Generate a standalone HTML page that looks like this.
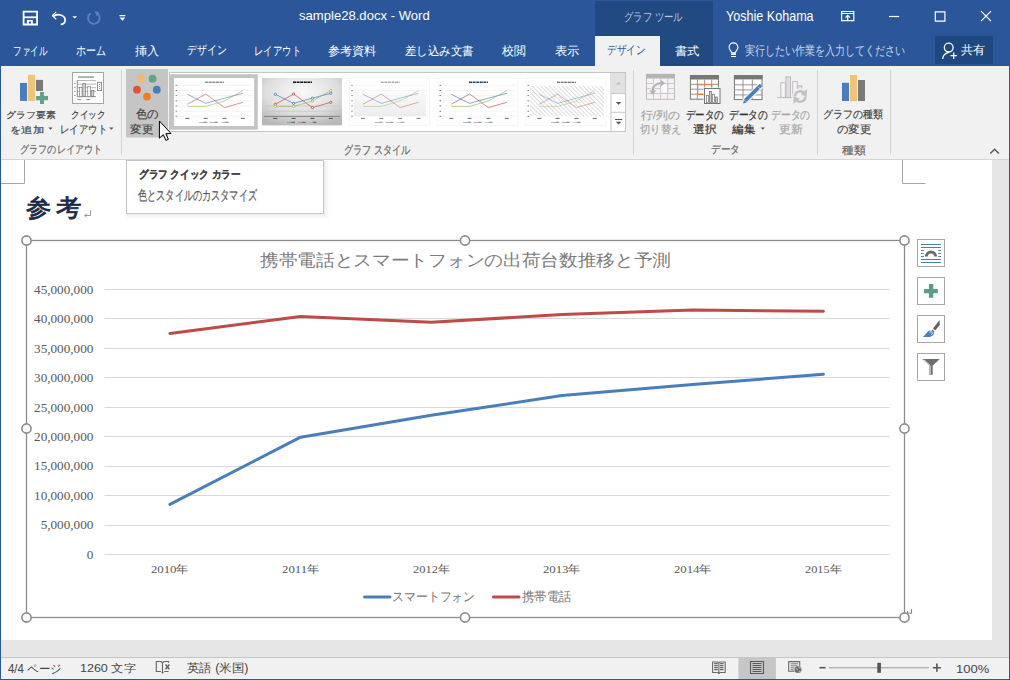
<!DOCTYPE html>
<html><head><meta charset="utf-8">
<style>
*{margin:0;padding:0;box-sizing:border-box}
html,body{width:1010px;height:680px;overflow:hidden;background:#2b579a;font-family:"Liberation Sans",sans-serif;position:relative}
.a{position:absolute;white-space:nowrap}
.t{line-height:1;transform-origin:0 0}
.s{-webkit-text-stroke:0.2px currentColor}
.h{-webkit-text-stroke:0.8px currentColor}
svg{position:absolute;left:0;top:0;overflow:visible}
</style></head><body>
<!-- title bar -->
<div class="a" style="left:595px;top:1px;width:118px;height:65px;background:#224a82"></div>
<div class="a" style="left:595px;top:36px;width:65px;height:30px;background:#f1f1f1"></div>
<div class="a" style="left:935px;top:36px;width:58px;height:28px;background:#1f4880"></div>
<svg width="1010" height="66" style="width:1010px;height:66px">
 <!-- save -->
 <g fill="none" stroke="#fff">
  <path d="M23.6 11.6h13.5v12.9h-13.5z" stroke-width="1.8"/>
  <path d="M23.6 17.3h13.5" stroke-width="1.8"/>
 </g>
 <path d="M26.9 19.9h5.9v4.7h-5.9z M29 21.6v3h2v-3z" fill="#fff" fill-rule="evenodd"/>
 <!-- undo -->
 <path d="M52.8 16.8c5-4.2 13.5-1.5 12.2 4.6c-0.5 2-2 3-4.3 3" fill="none" stroke="#fff" stroke-width="1.8"/>
 <path d="M51.6 15.6l4.2-4.2l0.9 0.9l-3.3 3.3l3.3 3.3l-0.9 0.9z" fill="#fff"/>
 <path d="M72.3 16.2h4.8l-2.4 2.4z" fill="#fff"/>
 <!-- redo disabled -->
 <path d="M90.6 13.3a5.8 5.8 0 1 0 5.8-0.4" fill="none" stroke="#5e80b8" stroke-width="1.9"/>
 <path d="M94.5 11.2l4.6 0.8l-2.2 4.2z" fill="#5e80b8"/>
 <!-- customize -->
 <path d="M119.5 15.1h5.8v1.2h-5.8z M119.5 17.6h5.8l-2.9 3.2z" fill="#fff"/>
 <!-- ribbon display options -->
 <g fill="none" stroke="#fff" stroke-width="1.2">
  <path d="M841.6 11.5h12.2v9.2h-12.2z M841.6 13.5h12.2"/>
  <path d="M847.7 15.5v5.2"/>
  <path d="M845.5 17.6l2.2-2.2l2.2 2.2"/>
  <!-- min -->
  <path d="M889 16.5h10.2"/>
  <!-- max -->
  <path d="M935.3 11.8h9.6v9.4h-9.6z"/>
  <!-- close -->
  <path d="M981 11.2l10 10M991 11.2l-10 10"/>
 </g>
 <!-- bulb -->
 <g fill="none" stroke="#fff" stroke-width="1.1">
  <path d="M731.6 52.8C731.3 51 729.1 49.8 729.1 47.3A4.4 4.4 0 0 1 737.9 47.3C737.9 49.8 735.7 51 735.4 52.8Z"/>
 </g>
 <path d="M731.1 53.3h4.8v1.6h-4.8z M731.1 56h4.8v0.9h-4.8z" fill="#fff"/>
 <!-- share person -->
 <g fill="none" stroke="#fff" stroke-width="1.3">
  <circle cx="948.7" cy="47.6" r="4.4"/>
  <path d="M942.6 58.8c0.6-3.5 3-5.9 6.4-6.4"/>
  <path d="M950.5 55.7h6.4M953.7 52.5v6.4"/>
 </g>
</svg>
<!-- ribbon -->
<div class="a" style="left:1px;top:66px;width:1008px;height:93px;background:#f1f1f1"></div>
<div class="a" style="left:1px;top:159px;width:1008px;height:1px;background:#d6d6d6"></div>
<svg width="1010" height="160" style="width:1010px;height:160px">
<defs>
<radialGradient id="rg2" cx="0.5" cy="0.3" r="0.75"><stop offset="0" stop-color="#fafafa"/><stop offset="0.6" stop-color="#dedede"/><stop offset="1" stop-color="#b8b8b8"/></radialGradient>
<linearGradient id="lg3" x1="0" y1="0" x2="0" y2="1"><stop offset="0" stop-color="#fff"/><stop offset="1" stop-color="#ececec"/></linearGradient>
<pattern id="hatch" width="3" height="3" patternUnits="userSpaceOnUse" patternTransform="rotate(-45)"><rect width="3" height="3" fill="#fff"/><path d="M0 0V3" stroke="#9a9a9a" stroke-width="0.7"/></pattern>
</defs>
<rect x="20" y="82.9" width="7" height="18" fill="#4a7ebb"/>
<rect x="28" y="74.8" width="7.1" height="26.1" fill="#efc37a"/>
<rect x="36" y="79.9" width="7" height="14.9" fill="#7a7a7a"/>
<path d="M35 91h10v4h4v6.2h-4v4h-6.5v-4H35z" fill="#f1f1f1"/>
<path d="M40 92h4v4h4v4.2h-4v3.8h-4v-3.8h-4V96h4z" fill="#62a387"/>
<rect x="72.5" y="72.5" width="31" height="31" fill="#fff" stroke="#a6a6a6" stroke-width="1"/>
<rect x="78" y="76.2" width="16" height="1.8" fill="#ababab"/>
<g fill="none" stroke="#8a8a8a" stroke-width="0.6"><path d="M77.3 80.5h18.7M77.3 84.2h18.7M77.3 87.7h18.7M77.3 91.4h18.7"/></g>
<path d="M77.3 80v16.7h18.7" fill="none" stroke="#6e6e6e" stroke-width="0.8"/>
<g stroke="#6e6e6e" stroke-width="0.6"><rect x="79.4" y="87.4" width="2.6" height="9.2" fill="#fff"/><rect x="82.8" y="83.3" width="2.6" height="13.3" fill="#d0d0d0"/><rect x="87.8" y="86.3" width="2.6" height="10.3" fill="#fff"/><rect x="91.2" y="90.3" width="2.6" height="6.3" fill="#d0d0d0"/></g>
<g stroke="#7a7a7a" stroke-width="0.8"><path d="M74.1 83.4h1.5M74.1 87.3h1.5M74.1 91.3h1.5M74.1 95.5h1.5M77.3 99.5h4M86.2 99.5h4"/></g>
<rect x="97.6" y="82.3" width="4" height="8.3" fill="#fff" stroke="#777" stroke-width="0.8"/>
<g fill="#777"><circle cx="99.6" cy="84.6" r="0.5"/><circle cx="99.6" cy="86.4" r="0.5"/><circle cx="99.6" cy="88.3" r="0.5"/></g>
<path d="M121.5 70V154.5" stroke="#d4d4d4" stroke-width="1"/>
<path d="M633.5 70V154.5" stroke="#d4d4d4" stroke-width="1"/>
<path d="M817.5 70V154.5" stroke="#d4d4d4" stroke-width="1"/>
<path d="M890.5 70V154.5" stroke="#d4d4d4" stroke-width="1"/>
<rect x="126" y="69" width="42" height="68.5" fill="#c5c5c5"/>
<circle cx="141" cy="78.7" r="3.9" fill="#efb96e"/>
<circle cx="152.6" cy="78.7" r="3.9" fill="#5fa389"/>
<circle cx="137" cy="89.7" r="3.9" fill="#dd5536"/>
<circle cx="156.8" cy="89.7" r="3.9" fill="#4a7ebb"/>
<circle cx="147" cy="96.6" r="3.9" fill="#ee7d24"/>
<rect x="169.5" y="72.5" width="456" height="59" fill="#fff" stroke="#c6c6c6" stroke-width="1"/>
<rect x="170" y="74.2" width="87.8" height="55.5" fill="#c4c4c4"/>
<rect x="174.1" y="78" width="80" height="48" fill="#fff"/>
<path d="M177.6 85.3H251.8" stroke="#ececec" stroke-width="0.7"/>
<path d="M177.6 90.5H251.8" stroke="#ececec" stroke-width="0.7"/>
<path d="M177.6 95.6H251.8" stroke="#ececec" stroke-width="0.7"/>
<path d="M177.6 100.8H251.8" stroke="#ececec" stroke-width="0.7"/>
<path d="M177.6 106.0H251.8" stroke="#ececec" stroke-width="0.7"/>
<path d="M177.6 111.2H251.8" stroke="#ececec" stroke-width="0.7"/>
<path d="M177.6 116.3H251.8" stroke="#ececec" stroke-width="0.7"/>
<path d="M175.6 85.3h1.6" stroke="#666" stroke-width="0.8"/>
<path d="M175.6 90.5h1.6" stroke="#666" stroke-width="0.8"/>
<path d="M175.6 95.6h1.6" stroke="#666" stroke-width="0.8"/>
<path d="M175.6 100.8h1.6" stroke="#666" stroke-width="0.8"/>
<path d="M175.6 106.0h1.6" stroke="#666" stroke-width="0.8"/>
<path d="M175.6 111.2h1.6" stroke="#666" stroke-width="0.8"/>
<path d="M175.6 116.3h1.6" stroke="#666" stroke-width="0.8"/>
<path d="M205.1 82.2h19" stroke="#444" stroke-width="0.9" stroke-dasharray="3 0.6"/>
<path d="M187.4 94.3 L205.7 103.4 L224.5 98.2 L242.9 93.3" fill="none" stroke="#4a7ebb" stroke-width="0.8" opacity="0.75"/>
<path d="M187.4 104.3 L205.7 94.0 L224.5 107.6 L242.9 102.3" fill="none" stroke="#c0504d" stroke-width="0.8" opacity="0.75"/>
<path d="M187.4 106.4 L205.7 106.4 L224.5 101.0 L242.9 90.5" fill="none" stroke="#9bbb59" stroke-width="0.8" opacity="0.75"/>
<path d="M185.4 118.4h4" stroke="#333" stroke-width="1" opacity="0.75"/>
<path d="M203.7 118.4h4" stroke="#333" stroke-width="1" opacity="0.75"/>
<path d="M222.5 118.4h4" stroke="#333" stroke-width="1" opacity="0.75"/>
<path d="M240.9 118.4h4" stroke="#333" stroke-width="1" opacity="0.75"/>
<path d="M199.1 122.4h4.2" stroke="#4a7ebb" stroke-width="0.7" opacity="0.8"/>
<path d="M203.3 122.3h3.8" stroke="#333" stroke-width="0.9" opacity="0.7"/>
<path d="M209.9 122.4h4.2" stroke="#c0504d" stroke-width="0.7" opacity="0.8"/>
<path d="M214.1 122.3h3.8" stroke="#333" stroke-width="0.9" opacity="0.7"/>
<path d="M220.7 122.4h4.2" stroke="#9bbb59" stroke-width="0.7" opacity="0.8"/>
<path d="M224.9 122.3h3.8" stroke="#333" stroke-width="0.9" opacity="0.7"/>
<rect x="262" y="78" width="80" height="47.4" fill="url(#rg2)"/>
<path d="M265.5 106.0H339.7" stroke="#c4c4c4" stroke-width="0.7"/>
<path d="M265.5 111.2H339.7" stroke="#c4c4c4" stroke-width="0.7"/>
<path d="M265.5 116.3H339.7" stroke="#c4c4c4" stroke-width="0.7"/>
<path d="M264.0 116.4H340.0" stroke="#707070" stroke-width="0.8"/>
<path d="M293.0 82.2h19" stroke="#111" stroke-width="1.4" stroke-dasharray="3 0.6"/>
<path d="M275.3 94.3 L293.6 103.4 L312.4 98.2 L330.8 93.3" fill="none" stroke="#4a7ebb" stroke-width="0.8" opacity="0.9"/>
<circle cx="275.3" cy="94.3" r="1.1" fill="#fff" stroke="#4a7ebb" stroke-width="0.9"/>
<circle cx="293.6" cy="103.4" r="1.1" fill="#fff" stroke="#4a7ebb" stroke-width="0.9"/>
<circle cx="312.4" cy="98.2" r="1.1" fill="#fff" stroke="#4a7ebb" stroke-width="0.9"/>
<circle cx="330.8" cy="93.3" r="1.1" fill="#fff" stroke="#4a7ebb" stroke-width="0.9"/>
<path d="M275.3 104.3 L293.6 94.0 L312.4 107.6 L330.8 102.3" fill="none" stroke="#c0504d" stroke-width="0.8" opacity="0.9"/>
<circle cx="275.3" cy="104.3" r="1.1" fill="#fff" stroke="#c0504d" stroke-width="0.9"/>
<circle cx="293.6" cy="94.0" r="1.1" fill="#fff" stroke="#c0504d" stroke-width="0.9"/>
<circle cx="312.4" cy="107.6" r="1.1" fill="#fff" stroke="#c0504d" stroke-width="0.9"/>
<circle cx="330.8" cy="102.3" r="1.1" fill="#fff" stroke="#c0504d" stroke-width="0.9"/>
<path d="M275.3 106.4 L293.6 106.4 L312.4 101.0 L330.8 90.5" fill="none" stroke="#9bbb59" stroke-width="0.8" opacity="0.9"/>
<circle cx="275.3" cy="106.4" r="1.1" fill="#fff" stroke="#9bbb59" stroke-width="0.9"/>
<circle cx="293.6" cy="106.4" r="1.1" fill="#fff" stroke="#9bbb59" stroke-width="0.9"/>
<circle cx="312.4" cy="101.0" r="1.1" fill="#fff" stroke="#9bbb59" stroke-width="0.9"/>
<circle cx="330.8" cy="90.5" r="1.1" fill="#fff" stroke="#9bbb59" stroke-width="0.9"/>
<path d="M273.3 118.4h4" stroke="#222" stroke-width="1" opacity="0.75"/>
<path d="M291.6 118.4h4" stroke="#222" stroke-width="1" opacity="0.75"/>
<path d="M310.4 118.4h4" stroke="#222" stroke-width="1" opacity="0.75"/>
<path d="M328.8 118.4h4" stroke="#222" stroke-width="1" opacity="0.75"/>
<path d="M287.0 122.4h4.2" stroke="#4a7ebb" stroke-width="0.7" opacity="0.8"/>
<path d="M291.2 122.3h3.8" stroke="#222" stroke-width="0.9" opacity="0.7"/>
<path d="M297.8 122.4h4.2" stroke="#c0504d" stroke-width="0.7" opacity="0.8"/>
<path d="M302.0 122.3h3.8" stroke="#222" stroke-width="0.9" opacity="0.7"/>
<path d="M308.6 122.4h4.2" stroke="#9bbb59" stroke-width="0.7" opacity="0.8"/>
<path d="M312.8 122.3h3.8" stroke="#222" stroke-width="0.9" opacity="0.7"/>
<rect x="349.7" y="78" width="80" height="47.4" fill="#fff" stroke="#f0f0f0" stroke-width="0.6"/>
<rect x="353.7" y="85" width="72" height="31" fill="url(#lg3)"/>
<path d="M353.2 85.3H427.4" stroke="#f0f0f0" stroke-width="0.7"/>
<path d="M353.2 90.5H427.4" stroke="#f0f0f0" stroke-width="0.7"/>
<path d="M353.2 95.6H427.4" stroke="#f0f0f0" stroke-width="0.7"/>
<path d="M353.2 100.8H427.4" stroke="#f0f0f0" stroke-width="0.7"/>
<path d="M353.2 106.0H427.4" stroke="#f0f0f0" stroke-width="0.7"/>
<path d="M353.2 111.2H427.4" stroke="#f0f0f0" stroke-width="0.7"/>
<path d="M353.2 116.3H427.4" stroke="#f0f0f0" stroke-width="0.7"/>
<path d="M351.2 85.3h1.6" stroke="#777" stroke-width="0.8"/>
<path d="M351.2 90.5h1.6" stroke="#777" stroke-width="0.8"/>
<path d="M351.2 95.6h1.6" stroke="#777" stroke-width="0.8"/>
<path d="M351.2 100.8h1.6" stroke="#777" stroke-width="0.8"/>
<path d="M351.2 106.0h1.6" stroke="#777" stroke-width="0.8"/>
<path d="M351.2 111.2h1.6" stroke="#777" stroke-width="0.8"/>
<path d="M351.2 116.3h1.6" stroke="#777" stroke-width="0.8"/>
<path d="M380.7 82.2h19" stroke="#777" stroke-width="0.9" stroke-dasharray="3 0.6"/>
<path d="M363.0 94.3 L381.3 103.4 L400.1 98.2 L418.5 93.3" fill="none" stroke="#4a7ebb" stroke-width="0.7" opacity="0.65"/>
<path d="M363.0 104.3 L381.3 94.0 L400.1 107.6 L418.5 102.3" fill="none" stroke="#c0504d" stroke-width="0.7" opacity="0.65"/>
<path d="M363.0 106.4 L381.3 106.4 L400.1 101.0 L418.5 90.5" fill="none" stroke="#9bbb59" stroke-width="0.7" opacity="0.65"/>
<path d="M361.0 118.4h4" stroke="#555" stroke-width="1" opacity="0.75"/>
<path d="M379.3 118.4h4" stroke="#555" stroke-width="1" opacity="0.75"/>
<path d="M398.1 118.4h4" stroke="#555" stroke-width="1" opacity="0.75"/>
<path d="M416.5 118.4h4" stroke="#555" stroke-width="1" opacity="0.75"/>
<path d="M374.7 122.4h4.2" stroke="#4a7ebb" stroke-width="0.7" opacity="0.8"/>
<path d="M378.9 122.3h3.8" stroke="#555" stroke-width="0.9" opacity="0.7"/>
<path d="M385.5 122.4h4.2" stroke="#c0504d" stroke-width="0.7" opacity="0.8"/>
<path d="M389.7 122.3h3.8" stroke="#555" stroke-width="0.9" opacity="0.7"/>
<path d="M396.3 122.4h4.2" stroke="#9bbb59" stroke-width="0.7" opacity="0.8"/>
<path d="M400.5 122.3h3.8" stroke="#555" stroke-width="0.9" opacity="0.7"/>
<rect x="438" y="78" width="80" height="47.4" fill="#fff" stroke="#f0f0f0" stroke-width="0.6"/>
<path d="M441.5 85.3H515.7" stroke="#eef0f6" stroke-width="0.7"/>
<path d="M441.5 90.5H515.7" stroke="#eef0f6" stroke-width="0.7"/>
<path d="M441.5 95.6H515.7" stroke="#eef0f6" stroke-width="0.7"/>
<path d="M441.5 100.8H515.7" stroke="#eef0f6" stroke-width="0.7"/>
<path d="M441.5 106.0H515.7" stroke="#eef0f6" stroke-width="0.7"/>
<path d="M441.5 111.2H515.7" stroke="#eef0f6" stroke-width="0.7"/>
<path d="M441.5 116.3H515.7" stroke="#eef0f6" stroke-width="0.7"/>
<path d="M439.5 85.3h1.6" stroke="#2a4f8a" stroke-width="0.8"/>
<path d="M439.5 90.5h1.6" stroke="#2a4f8a" stroke-width="0.8"/>
<path d="M439.5 95.6h1.6" stroke="#2a4f8a" stroke-width="0.8"/>
<path d="M439.5 100.8h1.6" stroke="#2a4f8a" stroke-width="0.8"/>
<path d="M439.5 106.0h1.6" stroke="#2a4f8a" stroke-width="0.8"/>
<path d="M439.5 111.2h1.6" stroke="#2a4f8a" stroke-width="0.8"/>
<path d="M439.5 116.3h1.6" stroke="#2a4f8a" stroke-width="0.8"/>
<path d="M469.0 82.2h19" stroke="#1f3f7a" stroke-width="1.4" stroke-dasharray="3 0.6"/>
<path d="M451.3 94.3 L469.6 103.4 L488.4 98.2 L506.8 93.3" fill="none" stroke="#4a7ebb" stroke-width="0.8" opacity="0.85"/>
<path d="M451.3 104.3 L469.6 94.0 L488.4 107.6 L506.8 102.3" fill="none" stroke="#c0504d" stroke-width="0.8" opacity="0.85"/>
<path d="M451.3 106.4 L469.6 106.4 L488.4 101.0 L506.8 90.5" fill="none" stroke="#9bbb59" stroke-width="0.8" opacity="0.85"/>
<path d="M449.3 118.4h4" stroke="#1f3f7a" stroke-width="1" opacity="0.75"/>
<path d="M467.6 118.4h4" stroke="#1f3f7a" stroke-width="1" opacity="0.75"/>
<path d="M486.4 118.4h4" stroke="#1f3f7a" stroke-width="1" opacity="0.75"/>
<path d="M504.8 118.4h4" stroke="#1f3f7a" stroke-width="1" opacity="0.75"/>
<path d="M463.0 122.4h4.2" stroke="#4a7ebb" stroke-width="0.7" opacity="0.8"/>
<path d="M467.2 122.3h3.8" stroke="#1f3f7a" stroke-width="0.9" opacity="0.7"/>
<path d="M473.8 122.4h4.2" stroke="#c0504d" stroke-width="0.7" opacity="0.8"/>
<path d="M478.0 122.3h3.8" stroke="#1f3f7a" stroke-width="0.9" opacity="0.7"/>
<path d="M484.6 122.4h4.2" stroke="#9bbb59" stroke-width="0.7" opacity="0.8"/>
<path d="M488.8 122.3h3.8" stroke="#1f3f7a" stroke-width="0.9" opacity="0.7"/>
<rect x="526" y="78" width="80" height="47.4" fill="#fff" stroke="#eee" stroke-width="0.6"/>
<rect x="530" y="86" width="74" height="30.5" fill="url(#hatch)"/>
<path d="M527.5 85.3h1.6" stroke="#555" stroke-width="0.8"/>
<path d="M527.5 90.5h1.6" stroke="#555" stroke-width="0.8"/>
<path d="M527.5 95.6h1.6" stroke="#555" stroke-width="0.8"/>
<path d="M527.5 100.8h1.6" stroke="#555" stroke-width="0.8"/>
<path d="M527.5 106.0h1.6" stroke="#555" stroke-width="0.8"/>
<path d="M527.5 111.2h1.6" stroke="#555" stroke-width="0.8"/>
<path d="M527.5 116.3h1.6" stroke="#555" stroke-width="0.8"/>
<path d="M557.0 82.2h19" stroke="#444" stroke-width="1.1" stroke-dasharray="3 0.6"/>
<path d="M539.3 94.3 L557.6 103.4 L576.4 98.2 L594.8 93.3" fill="none" stroke="#4a7ebb" stroke-width="0.8" opacity="0.55"/>
<path d="M539.3 104.3 L557.6 94.0 L576.4 107.6 L594.8 102.3" fill="none" stroke="#c0504d" stroke-width="0.8" opacity="0.55"/>
<path d="M539.3 106.4 L557.6 106.4 L576.4 101.0 L594.8 90.5" fill="none" stroke="#9bbb59" stroke-width="0.8" opacity="0.55"/>
<path d="M537.3 118.4h4" stroke="#333" stroke-width="1" opacity="0.75"/>
<path d="M555.6 118.4h4" stroke="#333" stroke-width="1" opacity="0.75"/>
<path d="M574.4 118.4h4" stroke="#333" stroke-width="1" opacity="0.75"/>
<path d="M592.8 118.4h4" stroke="#333" stroke-width="1" opacity="0.75"/>
<path d="M551.0 122.4h4.2" stroke="#4a7ebb" stroke-width="0.7" opacity="0.8"/>
<path d="M555.2 122.3h3.8" stroke="#333" stroke-width="0.9" opacity="0.7"/>
<path d="M561.8 122.4h4.2" stroke="#c0504d" stroke-width="0.7" opacity="0.8"/>
<path d="M566.0 122.3h3.8" stroke="#333" stroke-width="0.9" opacity="0.7"/>
<path d="M572.6 122.4h4.2" stroke="#9bbb59" stroke-width="0.7" opacity="0.8"/>
<path d="M576.8 122.3h3.8" stroke="#333" stroke-width="0.9" opacity="0.7"/>
<rect x="611" y="72.5" width="14.5" height="59" fill="#fff" stroke="#c6c6c6" stroke-width="1"/>
<rect x="611.5" y="73" width="13.5" height="20.6" fill="#e1e1e1"/>
<path d="M611 93.6h14.5M611 112.3h14.5" stroke="#c6c6c6" stroke-width="1"/>
<path d="M615.8 84.6h5.6l-2.8-2.8z" fill="#c0c0c0"/>
<path d="M615.8 102h5.6l-2.8 2.8z" fill="#555"/>
<path d="M615 119h7.2v1h-7.2z M615.8 121.8h5.6l-2.8 2.8z" fill="#555"/>
<path d="M159.4 121v17.2l3.9-3.6l2.6 5.8l2.5-1.1l-2.6-5.6l5.2-0.2z" fill="#fff" stroke="#000" stroke-width="1" stroke-linejoin="round"/>
<rect x="646.5" y="74.3" width="28" height="25" fill="#f5f1f5" stroke="#bdbdbd" stroke-width="1"/>
<rect x="646" y="74" width="29" height="4.5" fill="#b4b4b4"/>
<g stroke="#cacaca" stroke-width="1"><path d="M653.5 78.5v21M660.6 78.5v21M667.7 78.5v21M646.5 83.5h28M646.5 88.6h28M646.5 93.5h28"/></g>
<rect x="660.6" y="83.5" width="7.1" height="9.9" fill="#fbf9fb" stroke="#c8c8c8" stroke-width="1"/>
<path d="M652.7 91.5c-0.6-5 3-8.3 8.6-8.3" fill="none" stroke="#f5f1f5" stroke-width="4.2"/>
<path d="M652.7 91.5c-0.6-5 3-8.3 8.6-8.3" fill="none" stroke="#b4b4b4" stroke-width="2.2"/>
<path d="M660.6 79.6l4.6 3.6l-4.6 3.6z M649.2 90.4l3.5 4.4l3.5-4.4z" fill="#b4b4b4"/>
<rect x="690.4" y="75.6" width="28" height="23.6" fill="#fff" stroke="#777" stroke-width="1"/>
<rect x="690" y="75.1" width="29" height="4.4" fill="#777"/>
<g stroke="#8a8a8a" stroke-width="0.9"><path d="M697.4 79.5v20M704.6 79.5v20M711.7 79.5v20M690.5 84.3h28M690.5 89.2h28M690.5 94.2h28"/></g>
<path d="M711.7 87.5V84.8H697.7v9.6h6" fill="none" stroke="#ed7d31" stroke-width="1.1"/>
<rect x="703.5" y="87.5" width="17" height="16" fill="#f1f1f1"/>
<rect x="704.5" y="88.5" width="15.5" height="15" fill="#fff" stroke="#777" stroke-width="1"/>
<g stroke="#6e6e6e" stroke-width="0.7"><rect x="706.3" y="95.5" width="2.2" height="7" fill="#fff"/><rect x="709.3" y="91.6" width="2.2" height="10.9" fill="#ccc"/><rect x="712.3" y="94.2" width="2.2" height="8.3" fill="#fff"/><rect x="715.3" y="97" width="2.2" height="5.5" fill="#ccc"/></g>
<rect x="734.4" y="75.6" width="27.6" height="24" fill="#fff" stroke="#777" stroke-width="1"/>
<rect x="734" y="75.1" width="28.5" height="4.3" fill="#777"/>
<g stroke="#8a8a8a" stroke-width="0.9"><path d="M743 79.5v20M752.3 79.5v20M734.5 84.8h27.5M734.5 89.9h27.5M734.5 94.9h27.5"/></g>
<path d="M744.5 101.5l16.5-16" stroke="#f1f1f1" stroke-width="6"/>
<path d="M745.3 100.6l15.6-15.4" stroke="#4a7ebb" stroke-width="3.6"/>
<path d="M743 103.5l1-3.6l2.6 2.6z" fill="#4a7ebb"/>
<path d="M758.5 87.2l1.9 1.9" stroke="#f1f1f1" stroke-width="0.8"/>
<g stroke="#bdbdbd" stroke-width="1"><rect x="780.8" y="82.7" width="4.6" height="14.8" fill="#f6f2f6"/><rect x="785.9" y="76.9" width="4.6" height="20.6" fill="#dfdde0"/><rect x="792.7" y="81.6" width="4.6" height="15.9" fill="#f6f2f6"/><rect x="797.3" y="85.9" width="4.6" height="11.6" fill="#dfdde0"/></g>
<path d="M777 97.6h14.8" stroke="#bdbdbd" stroke-width="1"/>
<circle cx="800.2" cy="96.5" r="8.2" fill="#f1f1f1"/>
<path d="M794.9 96.5A5.3 5.3 0 0 1 804.2 93.1 M805.5 96.5A5.3 5.3 0 0 1 796.2 99.9" fill="none" stroke="#c2c2c2" stroke-width="2.6"/>
<path d="M806.9 89v7.4l-6.2-1.8z M793.5 104v-7.4l6.2 1.8z" fill="#c2c2c2"/>
<rect x="842" y="82.8" width="7" height="18.2" fill="#4a7ebb"/>
<rect x="850" y="75" width="7" height="26" fill="#efc37a"/>
<rect x="858" y="80" width="7" height="21" fill="#7a7a7a"/>
<path d="M990.3 153.6l4.3-4.3l4.3 4.3" fill="none" stroke="#555" stroke-width="1.4"/>
<path d="M48.3 127.5h4.4l-2.2 2.2z" fill="#555"/>
<path d="M109.2 127.5h4.4l-2.2 2.2z" fill="#555"/>
<path d="M760.6 127.5h4.4l-2.2 2.2z" fill="#555"/>
</svg>
<!-- doc -->
<div class="a" style="left:1px;top:160px;width:1008px;height:497px;background:#e6e6e6"></div>
<div class="a" style="left:1px;top:160px;width:991px;height:480px;background:#fff"></div>
<svg width="1010" height="680" style="width:1010px;height:680px">
<path d="M24.5 160V183.5H1M902.5 160V183.5H925.5" fill="none" stroke="#a6a6a6" stroke-width="1"/>
<path d="M90.5 210.5v5H85M86.8 213.5l-2 2l2 2" fill="none" stroke="#8a8a8a" stroke-width="0.9"/>
<rect x="26.5" y="240.5" width="878" height="377" fill="#fff" stroke="#8c8c8c" stroke-width="1.3"/>
<path d="M104.5 289.5H889.5" stroke="#d9d9d9" stroke-width="1"/>
<path d="M104.5 318.5H889.5" stroke="#d9d9d9" stroke-width="1"/>
<path d="M104.5 348.5H889.5" stroke="#d9d9d9" stroke-width="1"/>
<path d="M104.5 377.5H889.5" stroke="#d9d9d9" stroke-width="1"/>
<path d="M104.5 407.5H889.5" stroke="#d9d9d9" stroke-width="1"/>
<path d="M104.5 436.5H889.5" stroke="#d9d9d9" stroke-width="1"/>
<path d="M104.5 466.5H889.5" stroke="#d9d9d9" stroke-width="1"/>
<path d="M104.5 495.5H889.5" stroke="#d9d9d9" stroke-width="1"/>
<path d="M104.5 525.5H889.5" stroke="#d9d9d9" stroke-width="1"/>
<path d="M104.5 554.5H889.5" stroke="#d9d9d9" stroke-width="1"/>
<path d="M169.9 504.4 L300.6 437.2 L431.3 415.3 L562.0 395.6 L692.7 384.6 L823.4 374.2" fill="none" stroke="#4a7ebb" stroke-width="3" stroke-linecap="round" stroke-linejoin="round"/>
<path d="M169.9 333.4 L300.6 316.4 L431.3 322.2 L562.0 314.6 L692.7 310.1 L823.4 311.3" fill="none" stroke="#be4b48" stroke-width="3" stroke-linecap="round" stroke-linejoin="round"/>
<path d="M364.5 597.1H390" stroke="#4a7ebb" stroke-width="3" stroke-linecap="round"/>
<path d="M493.5 597.1H519" stroke="#be4b48" stroke-width="3" stroke-linecap="round"/>
<circle cx="26.5" cy="240.5" r="4.6" fill="#fff" stroke="#8c8c8c" stroke-width="1.6"/>
<circle cx="465" cy="240.5" r="4.6" fill="#fff" stroke="#8c8c8c" stroke-width="1.6"/>
<circle cx="904.5" cy="240.5" r="4.6" fill="#fff" stroke="#8c8c8c" stroke-width="1.6"/>
<circle cx="26.5" cy="428.5" r="4.6" fill="#fff" stroke="#8c8c8c" stroke-width="1.6"/>
<circle cx="904.5" cy="428.5" r="4.6" fill="#fff" stroke="#8c8c8c" stroke-width="1.6"/>
<circle cx="26.5" cy="617.5" r="4.6" fill="#fff" stroke="#8c8c8c" stroke-width="1.6"/>
<circle cx="465" cy="617.5" r="4.6" fill="#fff" stroke="#8c8c8c" stroke-width="1.6"/>
<circle cx="904.5" cy="617.5" r="4.6" fill="#fff" stroke="#8c8c8c" stroke-width="1.6"/>
<path d="M911.5 609v4.2h-3.8 M907.6 611v2.2" fill="none" stroke="#8c8c8c" stroke-width="1.1"/>
<rect x="917.5" y="239.5" width="27" height="27" fill="#fff" stroke="#a6a6a6" stroke-width="1"/>
<rect x="917.5" y="277.5" width="27" height="27" fill="#fff" stroke="#a6a6a6" stroke-width="1"/>
<rect x="917.5" y="315.5" width="27" height="27" fill="#fff" stroke="#a6a6a6" stroke-width="1"/>
<rect x="917.5" y="353.5" width="27" height="27" fill="#fff" stroke="#a6a6a6" stroke-width="1"/>
<g stroke="#4a7ebb" stroke-width="1"><path d="M921 244.5h20M921 247.5h20M921 259.5h20M921 262.5h20M921 250.5h2.8M921 253.5h2.8M921 256.5h2.8M938.2 250.5h2.8M938.2 253.5h2.8M938.2 256.5h2.8"/></g>
<path d="M926.4 256.5a4.6 4.6 0 0 1 9.2 0" fill="none" stroke="#6e6e6e" stroke-width="3"/>
<path d="M928.9 284.1h4.4v4.9h4.5v4.3h-4.5v4.4h-4.4v-4.4h-4.9v-4.3h4.9z" fill="#5c9e84"/>
<path d="M939.6 320l0.2 4.8l-4.6 5.6l-2.2-1.8z" fill="#606060"/>
<path d="M932.3 329.6l2.1 1.9l-0.6 0.7l-2.1-1.9z" fill="#606060"/>
<path d="M931 330.8c2 0 3.6 1.6 2.8 3.4c-1 2-4 2.8-6.2 2.8c-2.2 0.1-4 0-4.8 0c1.6-1.4 3-3.4 4.2-4.6c1.2-1.2 2.4-1.6 4-1.6z" fill="#4a7ebb"/>
<path d="M929.5 332.2c1-0.6 2.3-0.4 2.8 0.5c0.4 0.8-0.2 1.6-1.1 1.8" fill="none" stroke="#fff" stroke-width="0.9"/>
<path d="M922.2 359h17.7l-7.2 6.6v9.2h-3.5v-9.2z" fill="#6e6e6e"/>
<path d="M923.8 359.6l6.3 6v8.6" fill="none" stroke="#fff" stroke-width="0.9"/>
<rect x="126.3" y="160.3" width="199.0" height="55.0" fill="#000" opacity="0.016"/>
<rect x="126.6" y="160.6" width="200.0" height="56.0" fill="#000" opacity="0.016"/>
<rect x="126.9" y="160.9" width="201.0" height="57.0" fill="#000" opacity="0.016"/>
<rect x="127.2" y="161.2" width="202.0" height="58.0" fill="#000" opacity="0.016"/>
<rect x="126.5" y="160.5" width="197" height="53" fill="#fff" stroke="#c6c6c6" stroke-width="1"/>
</svg>
<!-- status -->
<div class="a" style="left:1px;top:657px;width:1008px;height:1px;background:#c6c6c6"></div>
<div class="a" style="left:1px;top:658px;width:1008px;height:21px;background:#f1f1f1"></div>
<svg width="1010" height="680" style="width:1010px;height:680px">
<g fill="none" stroke="#666" stroke-width="1.1"><path d="M161 661.5h-4.7v10h4.7M164.2 661.5h4.4v1.2M164.2 671.5h4.4M161 661.5l1.5 1.5l1.5-1.5M162.5 663v10"/><path d="M165.6 664.6l3.8 4.6M169.4 664.6l-3.8 4.6" stroke-width="1.5"/></g>
<path d="M161 672.2h3l-1.5 1.6z" fill="#666"/>
<rect x="738.4" y="658" width="37.5" height="21" fill="#c6c6c6"/>
<g fill="none" stroke="#6a6a6a" stroke-width="1.1"><path d="M712.6 662v10.5h5.4l0.9 0.9l0.9-0.9h5.4V662h-5.4l-0.9 0.6l-0.9-0.6z"/><path d="M714.2 663.6h3.6M714.2 665.6h3.6M714.2 667.6h3.6M714.2 669.6h3.6M720 663.6h3.6M720 665.6h3.6M720 667.6h3.6M720 669.6h3.6M718.9 662.5v11.3"/></g>
<g fill="none" stroke="#5a5a5a" stroke-width="1.1"><path d="M750.5 661.5h13v12h-13z"/><path d="M752.5 663.5h9M752.5 665.5h9M752.5 667.5h9M752.5 669.5h9M752.5 671.5h9" stroke-width="1"/></g>
<g fill="none" stroke="#6a6a6a" stroke-width="1.1"><path d="M797 671.2h-8.3v-9.6h11v5"/><path d="M790.6 663.8h7.5M790.6 665.8h7.5M790.6 667.8h4.5M790.6 669.8h3.5" stroke-width="0.9"/></g>
<circle cx="798" cy="669.6" r="4.2" fill="#f1f1f1"/>
<circle cx="798" cy="669.6" r="3.5" fill="#6a6a6a"/>
<path d="M795.8 668.2c1 0.2 1.6 1 1.4 2.2M798.6 666.6c0.2 1.2 1 1.6 2.2 1.4M798.4 672.4c0.4-1 1.3-1.3 2.2-1" stroke="#f1f1f1" stroke-width="0.8" fill="none"/>
<path d="M819.5 667.7h6" stroke="#555" stroke-width="1.6"/>
<path d="M829 667.8h100" stroke="#9a9a9a" stroke-width="1"/>
<rect x="877.3" y="662.8" width="3.6" height="10" fill="#555"/>
<path d="M932.8 667.7h8.2M936.9 663.6v8.2" stroke="#555" stroke-width="1.6"/>
</svg>
<div class="a t" style="left:298.57px;top:9.20px;font-size:13.60px;color:#fff;font-weight:400;font-family:'Liberation Sans',sans-serif;transform:scaleX(0.9626);">sample28.docx - Word</div>
<div class="a t" style="left:623.66px;top:11.05px;font-size:12.00px;color:#b9c8e0;font-weight:400;font-family:'Liberation Sans',sans-serif;transform:scaleX(0.7806);">グラフ ツール</div>
<div class="a t" style="left:726.12px;top:9.76px;font-size:13.73px;color:#fff;font-weight:400;font-family:'Liberation Sans',sans-serif;transform:scaleX(0.9165);">Yoshie Kohama</div>
<div class="a t" style="left:12.88px;top:44.80px;font-size:12.00px;color:#fff;font-weight:400;font-family:'Liberation Sans',sans-serif;transform:scaleX(0.7095);">ファイル</div>
<div class="a t" style="left:75.86px;top:44.38px;font-size:13.26px;color:#fff;font-weight:400;font-family:'Liberation Sans',sans-serif;transform:scaleX(0.7742);">ホーム</div>
<div class="a t" style="left:134.90px;top:44.70px;font-size:12.00px;color:#fff;font-weight:400;font-family:'Liberation Sans',sans-serif;transform:scaleX(1.0128);">挿入</div>
<div class="a t" style="left:186.64px;top:44.34px;font-size:12.46px;color:#fff;font-weight:400;font-family:'Liberation Sans',sans-serif;transform:scaleX(0.8297);">デザイン</div>
<div class="a t" style="left:253.60px;top:45.33px;font-size:12.33px;color:#fff;font-weight:400;font-family:'Liberation Sans',sans-serif;transform:scaleX(0.7819);">レイアウト</div>
<div class="a t" style="left:328.02px;top:45.44px;font-size:11.79px;color:#fff;font-weight:400;font-family:'Liberation Sans',sans-serif;transform:scaleX(1.0130);">参考資料</div>
<div class="a t" style="left:405.49px;top:44.87px;font-size:11.72px;color:#fff;font-weight:400;font-family:'Liberation Sans',sans-serif;transform:scaleX(0.9533);">差し込み文書</div>
<div class="a t" style="left:501.61px;top:44.60px;font-size:11.65px;color:#fff;font-weight:400;font-family:'Liberation Sans',sans-serif;transform:scaleX(0.9843);">校閲</div>
<div class="a t" style="left:554.59px;top:44.55px;font-size:12.00px;color:#fff;font-weight:400;font-family:'Liberation Sans',sans-serif;transform:scaleX(1.0216);">表示</div>
<div class="a t" style="left:606.78px;top:44.08px;font-size:12.15px;color:#2b579a;font-weight:400;font-family:'Liberation Sans',sans-serif;transform:scaleX(0.8120);">デザイン</div>
<div class="a t" style="left:675.10px;top:44.60px;font-size:12.00px;color:#fff;font-weight:400;font-family:'Liberation Sans',sans-serif;transform:scaleX(1.0215);">書式</div>
<div class="a t" style="left:745.18px;top:44.80px;font-size:12.69px;color:#c7d3e6;font-weight:400;font-family:'Liberation Sans',sans-serif;transform:scaleX(0.7714);">実行したい作業を入力してください</div>
<div class="a t" style="left:961.00px;top:44.00px;font-size:12.00px;color:#fff;font-weight:400;font-family:'Liberation Sans',sans-serif;transform:scaleX(1.0086);">共有</div>
<div class="a t s" style="left:5.91px;top:110.92px;font-size:9.32px;color:#444;font-weight:400;font-family:'Liberation Sans',sans-serif;transform:scaleX(1.1013);">グラフ要素</div>
<div class="a t s" style="left:10.33px;top:125.00px;font-size:9.39px;color:#444;font-weight:400;font-family:'Liberation Sans',sans-serif;transform:scaleX(1.2566);">を追加</div>
<div class="a t s" style="left:70.59px;top:110.16px;font-size:10.17px;color:#444;font-weight:400;font-family:'Liberation Sans',sans-serif;transform:scaleX(0.8670);">クイック</div>
<div class="a t s" style="left:60.28px;top:123.74px;font-size:10.93px;color:#444;font-weight:400;font-family:'Liberation Sans',sans-serif;transform:scaleX(0.8524);">レイアウト</div>
<div class="a t s" style="left:20.10px;top:144.46px;font-size:10.93px;color:#666;font-weight:400;font-family:'Liberation Sans',sans-serif;transform:scaleX(0.8301);">グラフのレイアウト</div>
<div class="a t s" style="left:136.04px;top:108.26px;font-size:11.72px;color:#444;font-weight:400;font-family:'Liberation Sans',sans-serif;transform:scaleX(0.9500);">色の</div>
<div class="a t s" style="left:129.70px;top:124.12px;font-size:11.01px;color:#444;font-weight:400;font-family:'Liberation Sans',sans-serif;transform:scaleX(1.0544);">変更</div>
<div class="a t s" style="left:343.64px;top:144.51px;font-size:11.50px;color:#666;font-weight:400;font-family:'Liberation Sans',sans-serif;transform:scaleX(0.7586);">グラフ スタイル</div>
<div class="a t s" style="left:640.85px;top:109.74px;font-size:10.94px;color:#a6a6a6;font-weight:400;font-family:'Liberation Sans',sans-serif;transform:scaleX(1.0777);">行/列の</div>
<div class="a t s" style="left:640.15px;top:124.32px;font-size:10.94px;color:#a6a6a6;font-weight:400;font-family:'Liberation Sans',sans-serif;transform:scaleX(0.9392);">切り替え</div>
<div class="a t s" style="left:685.71px;top:108.78px;font-size:11.60px;color:#333;font-weight:400;font-family:'Liberation Sans',sans-serif;transform:scaleX(0.7900);">データの</div>
<div class="a t s" style="left:693.01px;top:124.40px;font-size:11.08px;color:#333;font-weight:400;font-family:'Liberation Sans',sans-serif;transform:scaleX(1.0635);">選択</div>
<div class="a t s" style="left:728.57px;top:108.78px;font-size:11.60px;color:#333;font-weight:400;font-family:'Liberation Sans',sans-serif;transform:scaleX(0.8107);">データの</div>
<div class="a t s" style="left:732.00px;top:123.96px;font-size:11.08px;color:#333;font-weight:400;font-family:'Liberation Sans',sans-serif;transform:scaleX(1.0523);">編集</div>
<div class="a t s" style="left:771.44px;top:108.60px;font-size:11.76px;color:#a6a6a6;font-weight:400;font-family:'Liberation Sans',sans-serif;transform:scaleX(0.8188);">データの</div>
<div class="a t s" style="left:779.17px;top:123.94px;font-size:10.87px;color:#a6a6a6;font-weight:400;font-family:'Liberation Sans',sans-serif;transform:scaleX(1.0780);">更新</div>
<div class="a t s" style="left:710.52px;top:143.91px;font-size:11.35px;color:#666;font-weight:400;font-family:'Liberation Sans',sans-serif;transform:scaleX(0.8724);">データ</div>
<div class="a t s" style="left:822.90px;top:108.90px;font-size:11.30px;color:#444;font-weight:400;font-family:'Liberation Sans',sans-serif;transform:scaleX(0.9081);">グラフの種類</div>
<div class="a t s" style="left:836.59px;top:123.51px;font-size:11.34px;color:#444;font-weight:400;font-family:'Liberation Sans',sans-serif;transform:scaleX(1.0378);">の変更</div>
<div class="a t s" style="left:841.90px;top:145.44px;font-size:11.16px;color:#666;font-weight:400;font-family:'Liberation Sans',sans-serif;transform:scaleX(1.0807);">種類</div>
<div class="a t h" style="left:25.92px;top:196.04px;font-size:24.35px;color:#1b2a47;font-weight:400;font-family:'Liberation Sans',sans-serif;transform:scaleX(1.0557);">参</div>
<div class="a t h" style="left:55.92px;top:196.25px;font-size:24.17px;color:#1b2a47;font-weight:400;font-family:'Liberation Sans',sans-serif;transform:scaleX(1.0611);">考</div>
<div class="a t s" style="left:138.77px;top:169.44px;font-size:11.16px;color:#444;font-weight:700;font-family:'Liberation Sans',sans-serif;transform:scaleX(0.8718);">グラフ クイック カラー</div>
<div class="a t s" style="left:138.36px;top:188.77px;font-size:13.60px;color:#555;font-weight:400;font-family:'Liberation Sans',sans-serif;transform:scaleX(0.6529);">色とスタイルのカスタマイズ</div>
<div class="a t" style="left:259.81px;top:252.96px;font-size:16.79px;color:#7c7c7c;font-weight:400;font-family:'Liberation Serif',serif;transform:scaleX(1.0992);">携帯電話とスマートフォンの出荷台数推移と予測</div>
<div class="a t" style="left:391.70px;top:589.52px;font-size:13.31px;color:#777;font-weight:400;font-family:'Liberation Serif',serif;transform:scaleX(0.9137);">スマートフォン</div>
<div class="a t" style="left:521.90px;top:590.98px;font-size:12.52px;color:#777;font-weight:400;font-family:'Liberation Serif',serif;transform:scaleX(0.9481);">携帯電話</div>
<div class="a t" style="left:7.71px;top:662.50px;font-size:12.00px;color:#444;font-weight:400;font-family:'Liberation Sans',sans-serif;transform:scaleX(0.9528);">4/4 ページ</div>
<div class="a t" style="left:79.62px;top:663.47px;font-size:11.18px;color:#444;font-weight:400;font-family:'Liberation Sans',sans-serif;transform:scaleX(1.1196);">1260 文字</div>
<div class="a t" style="left:187.01px;top:662.00px;font-size:12.00px;color:#444;font-weight:400;font-family:'Liberation Sans',sans-serif;transform:scaleX(1.0355);">英語 (米国)</div>
<div class="a t" style="left:955.52px;top:663.77px;font-size:11.84px;color:#444;font-weight:400;font-family:'Liberation Sans',sans-serif;transform:scaleX(1.0970);">100%</div>
<div class="a t" style="left:34.04px;top:282.91px;font-size:13.20px;color:#595959;font-weight:400;font-family:'Liberation Serif',serif;">45,000,000</div>
<div class="a t" style="left:34.04px;top:312.33px;font-size:13.20px;color:#595959;font-weight:400;font-family:'Liberation Serif',serif;">40,000,000</div>
<div class="a t" style="left:34.04px;top:341.75px;font-size:13.20px;color:#595959;font-weight:400;font-family:'Liberation Serif',serif;">35,000,000</div>
<div class="a t" style="left:34.04px;top:371.18px;font-size:13.20px;color:#595959;font-weight:400;font-family:'Liberation Serif',serif;">30,000,000</div>
<div class="a t" style="left:34.04px;top:400.60px;font-size:13.20px;color:#595959;font-weight:400;font-family:'Liberation Serif',serif;">25,000,000</div>
<div class="a t" style="left:34.04px;top:430.02px;font-size:13.20px;color:#595959;font-weight:400;font-family:'Liberation Serif',serif;">20,000,000</div>
<div class="a t" style="left:34.04px;top:459.44px;font-size:13.20px;color:#595959;font-weight:400;font-family:'Liberation Serif',serif;">15,000,000</div>
<div class="a t" style="left:34.04px;top:488.87px;font-size:13.20px;color:#595959;font-weight:400;font-family:'Liberation Serif',serif;">10,000,000</div>
<div class="a t" style="left:40.64px;top:518.29px;font-size:13.20px;color:#595959;font-weight:400;font-family:'Liberation Serif',serif;">5,000,000</div>
<div class="a t" style="left:86.84px;top:547.71px;font-size:13.20px;color:#595959;font-weight:400;font-family:'Liberation Serif',serif;">0</div>
<div class="a t" style="left:150.77px;top:563.69px;font-size:11.40px;color:#595959;font-weight:400;font-family:'Liberation Serif',serif;transform:scaleX(1.1188);">2010年</div>
<div class="a t" style="left:282.06px;top:564.24px;font-size:11.37px;color:#595959;font-weight:400;font-family:'Liberation Serif',serif;transform:scaleX(1.1274);">2011年</div>
<div class="a t" style="left:412.84px;top:564.24px;font-size:11.37px;color:#595959;font-weight:400;font-family:'Liberation Serif',serif;transform:scaleX(1.0963);">2012年</div>
<div class="a t" style="left:542.87px;top:563.69px;font-size:11.40px;color:#595959;font-weight:400;font-family:'Liberation Serif',serif;transform:scaleX(1.1188);">2013年</div>
<div class="a t" style="left:673.57px;top:563.69px;font-size:11.40px;color:#595959;font-weight:400;font-family:'Liberation Serif',serif;transform:scaleX(1.1188);">2014年</div>
<div class="a t" style="left:804.64px;top:564.12px;font-size:11.14px;color:#595959;font-weight:400;font-family:'Liberation Serif',serif;transform:scaleX(1.1062);">2015年</div>
</body></html>
